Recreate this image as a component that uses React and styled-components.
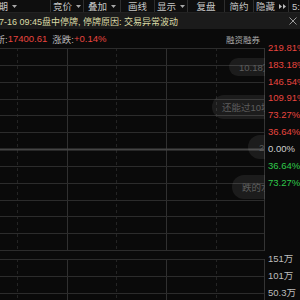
import React from "react"
import styled, { createGlobalStyle } from "styled-components"

const GlobalStyle = createGlobalStyle`
  html, body {
    margin: 0;
    padding: 0;
    background: #0a0a0a;
    overflow: hidden;
  }
  body {
    font-family: "Liberation Sans", "Noto Sans CJK SC", sans-serif;
  }
`

const ROW = 202 / 12

const tools = [
  { label: "周期", w: 61, arrow: true, left: true },
  { label: "竞价", w: 33, arrow: true },
  { label: "叠加", w: 37, arrow: true },
  { label: "画线", w: 34 },
  { label: "显示", w: 33, arrow: true },
  { label: "复盘", w: 37 },
  { label: "简约", w: 29 },
  { label: "隐藏", w: 35, double: true },
  { label: "5:35", w: 20, left: true }
]

const priceLabels = [
  { t: "219.81%", c: "#e8453f" },
  { t: "183.18%", c: "#e8453f" },
  { t: "146.54%", c: "#e8453f" },
  { t: "109.91%", c: "#e8453f" },
  { t: "73.27%", c: "#e8453f" },
  { t: "36.64%", c: "#e8453f" },
  { t: "0.00%", c: "#cfcfcf" },
  { t: "36.64%", c: "#2fc94a" },
  { t: "73.27%", c: "#2fc94a" }
]

const bubbles = [
  { text: "10.18万", x: 229, y: 10, h: 18, pad: 10 },
  { text: "还能过10块", x: 212, y: 47, h: 24, pad: 10 },
  { text: "20", x: 248, y: 87, h: 24, pad: 11 },
  { text: "跌的水", x: 232, y: 127, h: 24, pad: 10 }
]

function Arrow() {
  return (
    <svg width="5" height="3" viewBox="0 0 5 3">
      <path d="M0 0 L5 0 L2.5 3 Z" fill="#a8a8a8" />
    </svg>
  )
}

function DoubleArrow() {
  return (
    <svg width="7" height="5" viewBox="0 0 7 5">
      <path d="M0 0 L3 2.5 L0 5 Z M4 0 L7 2.5 L4 5 Z" fill="#bdbdbd" />
    </svg>
  )
}

function Grid({ height, rows, zero }) {
  const cols = [
    { x: 17.5, dash: true },
    { x: 67.5 },
    { x: 116.5, dash: true },
    { x: 166.5 },
    { x: 216.5, dash: true }
  ]
  const lines = []
  for (let i = 0; i <= rows; i++) {
    const y = Math.min(Math.round(i * ROW) + 0.5, height - 0.5)
    const isZero = zero === i
    lines.push(
      <line
        key={i}
        x1="0"
        x2="265"
        y1={y}
        y2={y}
        stroke={isZero ? "#454545" : "#2c2c2c"}
        strokeWidth={isZero ? 2 : 1}
      />
    )
  }
  return (
    <svg width="265" height={height} style={{ display: "block" }}>
      {cols.map((c) => (
        <line
          key={c.x}
          x1={c.x}
          x2={c.x}
          y1="0"
          y2={height}
          stroke={c.dash ? "#242424" : "#303030"}
          strokeDasharray={c.dash ? "3 3" : undefined}
        />
      ))}
      {lines}
      <line x1="264.5" x2="264.5" y1="0" y2={height} stroke="#343434" />
    </svg>
  )
}

export default function App() {
  return (
    <>
      <GlobalStyle />
      <Screen>
        <Toolbar>
          {tools.map((t, i) => (
            <ToolButton key={i} $w={t.w} $first={i === 0} $left={t.left}>
              <span>{t.label}</span>
              {t.arrow && <Arrow />}
              {t.double && <DoubleArrow />}
            </ToolButton>
          ))}
        </Toolbar>

        <Notice>
          <NoticeText>2024-07-16 09:45盘中停牌, 停牌原因: 交易异常波动</NoticeText>
          <Close>
            <svg width="8" height="8" viewBox="0 0 8 8">
              <path d="M0.5 0.5 L7.5 7.5 M7.5 0.5 L0.5 7.5" stroke="#9a9a9a" strokeWidth="1" />
            </svg>
          </Close>
        </Notice>

        <InfoRow>
          <Quote>
            <Key $cut>最新:</Key>
            <Value>17400.61</Value>
            <Key>涨跌:</Key>
            <Value>+0.14%</Value>
          </Quote>
          <MarginTag>融资融券</MarginTag>
        </InfoRow>

        <ChartRow>
          <Plot $h={203}>
            <Grid height={203} rows={12} zero={6} />
            {bubbles.map((b, i) => (
              <Bubble key={i} $x={b.x} $y={b.y} $h={b.h} $pad={b.pad}>
                {b.text}
              </Bubble>
            ))}
          </Plot>
          <Axis>
            {priceLabels.map((l, i) => (
              <AxisLabel key={i} $color={l.c}>
                {l.t}
              </AxisLabel>
            ))}
          </Axis>
        </ChartRow>

        <Spacer />

        <ChartRow>
          <Plot $h={42}>
            <Grid height={42} rows={2} />
          </Plot>
          <Axis>
            <AxisLabel $color="#bdbdbd">151万</AxisLabel>
            <AxisLabel $color="#bdbdbd">101万</AxisLabel>
            <AxisLabel $color="#bdbdbd">50.3万</AxisLabel>
          </Axis>
        </ChartRow>
      </Screen>
    </>
  )
}

const Screen = styled.div`
  width: 300px;
  height: 300px;
  overflow: hidden;
  background: #0a0a0a;
  display: flex;
  flex-direction: column;
`

const Toolbar = styled.div`
  display: flex;
  height: 12px;
  margin-left: -11px;
  background: #0e0e0e;
  border-bottom: 1px solid #222;
  flex: none;
`

const ToolButton = styled.div`
  width: ${(p) => p.$w}px;
  flex: none;
  box-sizing: border-box;
  display: flex;
  align-items: center;
  justify-content: ${(p) => (p.$left ? "flex-start" : "center")};
  gap: 4px;
  padding-left: ${(p) => (p.$left && !p.$first ? "3px" : "0")};
  border-left: ${(p) => (p.$first ? "none" : "1px solid #2e2e2e")};
  color: #c6c6c6;
  font-size: 9.5px;
  white-space: nowrap;
  overflow: hidden;
`

const Notice = styled.div`
  height: 16px;
  flex: none;
  display: flex;
  align-items: center;
  background: #1b1b1b;
  overflow: hidden;
`

const NoticeText = styled.div`
  flex: 1;
  margin-left: -29px;
  color: #dcdca6;
  font-size: 9px;
  white-space: nowrap;
  overflow: hidden;
`

const Close = styled.div`
  width: 8px;
  height: 8px;
  margin: 0 3px 0 4px;
  display: flex;
`

const InfoRow = styled.div`
  height: 19px;
  flex: none;
  display: flex;
  align-items: center;
  font-size: 9px;
  white-space: nowrap;
`

const Quote = styled.div`
  display: flex;
  align-items: center;
  margin-left: -14px;
`

const Key = styled.span`
  color: #b4b4b4;
  font-size: 9.5px;
  margin-left: ${(p) => (p.$cut ? "0" : "5px")};
`

const Value = styled.span`
  color: #e8453f;
  font-size: 9.5px;
`

const MarginTag = styled.span`
  margin-left: auto;
  margin-right: 40px;
  color: #a9a9a9;
  font-size: 8.5px;
`

const ChartRow = styled.div`
  display: flex;
  flex: none;
`

const Plot = styled.div`
  position: relative;
  width: 265px;
  height: ${(p) => p.$h}px;
  overflow: hidden;
  flex: none;
`

const Bubble = styled.div`
  position: absolute;
  left: ${(p) => p.$x}px;
  top: ${(p) => p.$y}px;
  height: ${(p) => p.$h}px;
  padding: 0 14px 0 ${(p) => p.$pad}px;
  border-radius: ${(p) => p.$h / 2}px;
  background: rgba(255, 255, 255, 0.075);
  color: #5c5c5c;
  font-size: 9.5px;
  display: flex;
  align-items: center;
  white-space: nowrap;
`

const Axis = styled.div`
  display: flex;
  flex-direction: column;
  margin-top: -8px;
  padding-left: 3px;
`

const AxisLabel = styled.div`
  height: ${ROW}px;
  line-height: ${ROW}px;
  color: ${(p) => p.$color};
  font-size: 9.5px;
  white-space: nowrap;
`

const Spacer = styled.div`
  height: 8px;
  flex: none;
`
